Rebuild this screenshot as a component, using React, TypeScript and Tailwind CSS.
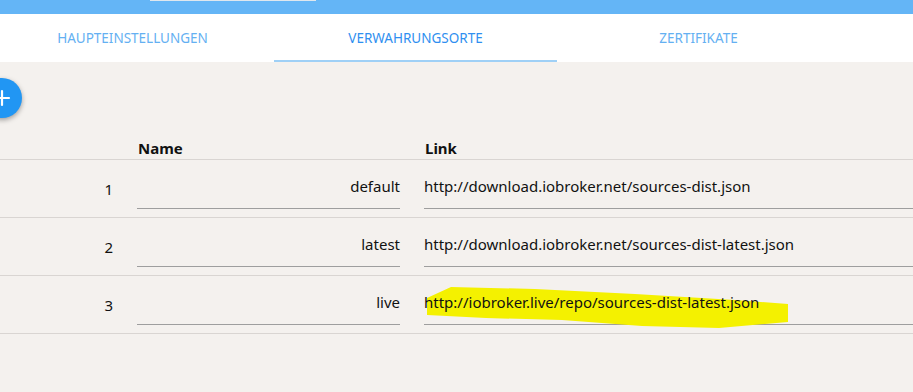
import { Plus } from "lucide-react";

const rows = [
  { id: 1, name: "default", link: "http://download.iobroker.net/sources-dist.json" },
  { id: 2, name: "latest", link: "http://download.iobroker.net/sources-dist-latest.json" },
  { id: 3, name: "live", link: "http://iobroker.live/repo/sources-dist-latest.json", marked: true },
];

const tabs = ["Haupteinstellungen", "Verwahrungsorte", "Zertifikate"];

function Highlight() {
  return (
    <svg
      className="absolute left-[2px] top-[-5px] pointer-events-none"
      width="364"
      height="44"
      viewBox="0 0 364 44"
    >
      <path
        d="M1 11 L25 0 L109 2 L209 7 L309 13 L362 17 L362 35 L293 41 L216 39 L136 33 L60 31 L1 28 Z"
        fill="#f4f100"
      />
    </svg>
  );
}

function Row({ id, name, link, marked }: { id: number; name: string; link: string; marked?: boolean }) {
  return (
    <div className="flex h-[58px] border-b border-[#d9d5d2]">
      <div className="w-[137px] shrink-0 pr-[24px] pt-[19px] text-right text-[15px] leading-[20px]">
        {id}
      </div>
      <div className="w-[263px] shrink-0 mt-[14px] h-[35px] border-b border-[#9e9e9e] pt-[2px] text-right text-[15px] leading-[20px]">
        {name}
      </div>
      <div className="w-[24px] shrink-0" />
      <div className="flex-1 mt-[14px] h-[35px] border-b border-[#9e9e9e] pt-[2px] text-[15px] leading-[20px]">
        <div className="relative inline-block">
          {marked && <Highlight />}
          <span className="relative">{link}</span>
        </div>
      </div>
    </div>
  );
}

export default function App() {
  return (
    <div
      className="w-[913px] h-[392px] overflow-hidden bg-[#f4f1ee] text-[#111]"
      style={{ fontFamily: '"Noto Sans", "Open Sans", sans-serif' }}
    >
      <div className="h-[14px] bg-[#64b5f6]">
        <div className="ml-[150px] w-[166px] h-[1px] bg-[#dfe7ee]" />
      </div>

      <div className="flex h-[48px] bg-white ml-[-9px]">
        {tabs.map((t, i) => (
          <div
            key={t}
            className={
              "relative w-[283px] shrink-0 flex items-center justify-center uppercase text-[13.5px] " +
              (i === 1 ? "text-[#2f8ff0]" : "text-[#64b0f2]")
            }
          >
            {t}
            {i === 1 && <div className="absolute left-0 right-0 bottom-0 h-[2px] bg-[#9fd0f6]" />}
          </div>
        ))}
      </div>

      <div className="pt-[16px]">
        <button className="ml-[-18px] w-[40px] h-[40px] rounded-full bg-[#2196f3] flex items-center justify-center shadow-[0_2px_5px_rgba(0,0,0,0.35)]">
          <Plus className="w-[24px] h-[24px] text-white" strokeWidth={2.2} />
        </button>
      </div>

      <div className="flex h-[42px] border-b border-[#d9d5d2] items-end pb-[1px] font-bold text-[15px] leading-[20px]">
        <div className="w-[138px] shrink-0" />
        <div className="w-[287px] shrink-0">Name</div>
        <div>Link</div>
      </div>

      {rows.map((r) => (
        <Row key={r.id} {...r} />
      ))}
    </div>
  );
}
